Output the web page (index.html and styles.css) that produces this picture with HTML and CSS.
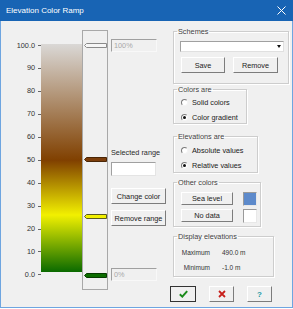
FILE: index.html
```html
<!DOCTYPE html>
<html lang="en">
<head>
    <meta charset="UTF-8">
    <title>Elevation Color Ramp</title>
    <link rel="stylesheet" href="styles.css">
</head>
<body>
<div class="window">
    <div class="titlebar">
        <span>Elevation Color Ramp</span>
        <svg class="close" width="9" height="9" viewBox="0 0 9 9"><path d="M0.5 0.5 L8.5 8.5 M8.5 0.5 L0.5 8.5" stroke="#fff" stroke-width="1"/></svg>
    </div>
    <div class="content">
        <div class="ramp">
            <div class="axis">
                <div class="tick"><span>100.0</span><i></i></div>
                <div class="tick"><span>90</span><i></i></div>
                <div class="tick"><span>80</span><i></i></div>
                <div class="tick"><span>70</span><i></i></div>
                <div class="tick"><span>60</span><i></i></div>
                <div class="tick"><span>50</span><i></i></div>
                <div class="tick"><span>40</span><i></i></div>
                <div class="tick"><span>30</span><i></i></div>
                <div class="tick"><span>20</span><i></i></div>
                <div class="tick"><span>10</span><i></i></div>
                <div class="tick"><span>0.0</span><i></i></div>
            </div>
            <div class="bar"></div>
            <div class="track">
                <svg class="marker m100" width="23" height="5" viewBox="0 0 23 5"><polygon points="0.5,2.5 2.5,0.5 22.5,0.5 22.5,4.5 2.5,4.5" fill="#f6f6f6" stroke="#8a8a8a"/></svg>
                <svg class="marker m50" width="23" height="5" viewBox="0 0 23 5"><polygon points="0.5,2.5 2.5,0.5 22.5,0.5 22.5,4.5 2.5,4.5" fill="#7c3e0c" stroke="#4a2606"/></svg>
                <svg class="marker m25" width="23" height="5" viewBox="0 0 23 5"><polygon points="0.5,2.5 2.5,0.5 22.5,0.5 22.5,4.5 2.5,4.5" fill="#f2f000" stroke="#5a5a20"/></svg>
                <svg class="marker m0" width="23" height="5" viewBox="0 0 23 5"><polygon points="0.5,2.5 2.5,0.5 22.5,0.5 22.5,4.5 2.5,4.5" fill="#0c6c00" stroke="#063c00"/></svg>
            </div>
            <div class="side">
                <div class="pct">100%</div>
                <div class="sel-label">Selected range</div>
                <div class="edit"></div>
                <div class="btn wide first">Change color</div>
                <div class="btn wide">Remove range</div>
                <div class="pct bottom">0%</div>
            </div>
        </div>

        <div class="panel">
            <fieldset class="g-schemes">
                <legend>Schemes</legend>
                <div class="inner">
                    <div class="combo"><span class="arrow"></span></div>
                    <div class="row-btns">
                        <div class="btn save">Save</div>
                        <div class="btn remove">Remove</div>
                    </div>
                </div>
            </fieldset>

            <fieldset class="g-colors">
                <legend>Colors are</legend>
                <div class="inner radios">
                    <div class="radio-row"><span class="radio"></span>Solid colors</div>
                    <div class="radio-row"><span class="radio on"></span>Color gradient</div>
                </div>
            </fieldset>

            <fieldset class="g-elev">
                <legend>Elevations are</legend>
                <div class="inner radios">
                    <div class="radio-row"><span class="radio"></span>Absolute values</div>
                    <div class="radio-row"><span class="radio on"></span>Relative values</div>
                </div>
            </fieldset>

            <fieldset class="g-other">
                <legend>Other colors</legend>
                <div class="inner">
                    <div class="color-row">
                        <div class="btn pick">Sea level</div>
                        <span class="swatch sea"></span>
                    </div>
                    <div class="color-row">
                        <div class="btn pick">No data</div>
                        <span class="swatch blank"></span>
                    </div>
                </div>
            </fieldset>

            <fieldset class="g-display">
                <legend>Display elevations</legend>
                <div class="inner stats">
                    <span class="k">Maximum</span><span>490.0 m</span>
                    <span class="k">Minimum</span><span>-1.0 m</span>
                </div>
            </fieldset>

            <div class="actions">
                <div class="btn act default">
                    <svg width="9" height="8" viewBox="0 0 9 8"><path d="M0.8 4.2 L3.3 6.6 L8.2 1.2" fill="none" stroke="#1c8c1c" stroke-width="2"/></svg>
                </div>
                <div class="btn act">
                    <svg width="8" height="8" viewBox="0 0 8 8"><path d="M1 1 L7 7 M7 1 L1 7" stroke="#c8201c" stroke-width="1.8"/></svg>
                </div>
                <div class="btn act help">?</div>
            </div>
        </div>
    </div>
</div>
</body>
</html>
```

FILE: styles.css
```css
* {
    box-sizing: border-box;
}

body {
    margin: 0;
    font-family: "Liberation Sans", Arial, sans-serif;
    font-size: 7.3px;
    color: #2a2a2a;
    background: #fff;
}

.window {
    width: 293px;
    height: 308px;
    display: flex;
    flex-direction: column;
}

.titlebar {
    height: 21px;
    flex: none;
    background-color: #1864b4;
    color: #fff;
    font-size: 8px;
    display: flex;
    align-items: center;
    justify-content: space-between;
    padding: 0 7px 0 6px;
}

.content {
    flex: 1;
    display: flex;
    background-color: #f0f0f0;
    border: 1px solid #6ea5e0;
    border-top: none;
}

/* left side: scale, gradient and slider */
.ramp {
    display: flex;
    height: 260px;
    margin-top: 9px;
}

.axis {
    width: 40px;
    display: flex;
    flex-direction: column;
    justify-content: space-between;
    padding: 11.5px 0 11px;
}

.tick {
    display: flex;
    justify-content: flex-end;
    align-items: center;
    height: 8px;
    line-height: 8px;
    color: #333;
}

.tick i {
    width: 3px;
    height: 1px;
    margin-left: 3px;
    background-color: #666;
}

.bar {
    width: 41px;
    height: 228px;
    margin-top: 14px;
    background: linear-gradient(to bottom, #dad8d6 0%, #804000 51%, #f2f000 75%, #0a6a00 100%);
}

.track {
    width: 26px;
    height: 260px;
    border: 1px solid #a8a8a8;
    position: relative;
}

.marker {
    position: absolute;
    left: 1px;
    display: block;
}

.m100 { top: 12px; }
.m50 { top: 126px; }
.m25 { top: 183px; }
.m0 { top: 242px; }

.side {
    margin-left: 3px;
    width: 55px;
    display: flex;
    flex-direction: column;
    align-items: flex-start;
}

.pct {
    width: 46px;
    height: 13px;
    margin-top: 9px;
    padding-left: 2px;
    line-height: 11px;
    color: #a8a8a8;
    border-top: 1px solid #a0a0a0;
    border-left: 1px solid #a0a0a0;
    border-right: 1px solid #f8f8f8;
    border-bottom: 1px solid #f8f8f8;
}

.pct.bottom {
    margin-top: 42px;
}

.sel-label {
    margin-top: 97px;
    line-height: 8px;
}

.edit {
    margin-top: 5px;
    width: 45px;
    height: 14px;
    background-color: #fff;
    border: 1px solid;
    border-color: #a0a0a0 #e4e4e4 #e4e4e4 #a0a0a0;
}

/* classic buttons */
.btn {
    display: flex;
    align-items: center;
    justify-content: center;
    background-color: #f0f0f0;
    border: 1px solid;
    border-color: #fff #7c7c7c #7c7c7c #fff;
    color: #222;
    white-space: nowrap;
}

.btn.wide {
    width: 55px;
    height: 16px;
    margin-top: 6px;
}

.btn.wide.first {
    margin-top: 12px;
}

/* right side */
.panel {
    margin-left: 7px;
    padding-top: 6px;
    width: 116px;
    display: flex;
    flex-direction: column;
    align-items: flex-start;
}

fieldset {
    margin: 0;
    padding: 0;
    min-width: 0;
    border: 1px solid #cdcdcd;
    box-shadow: inset 1px 1px 0 #fff, 1px 1px 0 #fff;
}

legend {
    margin-left: 3px;
    padding: 0 1px;
    height: 9px;
    line-height: 9px;
    color: #444;
}

.g-schemes { width: 116px; }
.g-colors { width: 74px; margin-top: 1px; }
.g-elev { width: 85px; margin-top: 8px; }
.g-other { width: 88px; margin-top: 5px; }
.g-display { width: 101px; margin-top: 5px; }

.g-schemes .inner {
    padding: 5px 0 10px 6px;
}

.combo {
    width: 104px;
    height: 11px;
    background-color: #fff;
    border: 1px solid;
    border-color: #a0a0a0 #e0e0e0 #e0e0e0 #a0a0a0;
    display: flex;
    justify-content: flex-end;
    align-items: center;
    padding-right: 2px;
}

.arrow {
    width: 0;
    height: 0;
    border-left: 2.5px solid transparent;
    border-right: 2.5px solid transparent;
    border-top: 3px solid #111;
}

.row-btns {
    display: flex;
    margin-top: 5px;
    padding-left: 1px;
}

.btn.save {
    width: 44px;
    height: 16px;
}

.btn.remove {
    width: 45px;
    height: 16px;
    margin-left: 8px;
}

.radios {
    display: flex;
    flex-direction: column;
    gap: 5px;
    padding: 3px 0 1px 7px;
}

.g-elev .radios {
    padding: 4px 0 2px 7px;
}

.radio-row {
    display: flex;
    align-items: center;
    height: 10px;
    color: #222;
}

.radio {
    width: 7px;
    height: 7px;
    margin-right: 4px;
    border-radius: 50%;
    border: 1px solid;
    border-color: #7a7a7a #f4f4f4 #f4f4f4 #7a7a7a;
    background-color: #fff;
    display: flex;
    align-items: center;
    justify-content: center;
}

.radio.on::after {
    content: "";
    width: 3px;
    height: 3px;
    border-radius: 50%;
    background-color: #111;
}

.g-other .inner {
    padding: 5px 0 3px 7px;
    display: flex;
    flex-direction: column;
    gap: 3px;
}

.color-row {
    display: flex;
    align-items: flex-start;
    height: 14px;
}

.btn.pick {
    width: 52px;
    height: 13px;
}

.swatch {
    width: 14px;
    height: 14px;
    margin-left: 10px;
    border: 1px solid;
    border-color: #9a9a9a #e8e8e8 #e8e8e8 #9a9a9a;
}

.swatch.sea {
    background-color: #5d8acb;
}

.swatch.blank {
    background-color: #fff;
}

/* slightly smaller font, as in the original dialog */
.stats {
    display: grid;
    grid-template-columns: 36px auto;
    column-gap: 12px;
    row-gap: 5px;
    padding: 7px 0 3px;
    font-size: 6.5px;
    line-height: 10px;
    color: #333;
}

.stats .k {
    text-align: right;
}

.actions {
    display: flex;
    gap: 13px;
    margin-top: 9px;
    margin-left: -3px;
}

.btn.act {
    width: 25px;
    height: 16px;
}

.btn.default {
    width: 26px;
    outline: 1px solid #333;
    outline-offset: -1px;
}

.btn.help {
    color: #1a9aa4;
    font-weight: bold;
    font-size: 8px;
}
```
